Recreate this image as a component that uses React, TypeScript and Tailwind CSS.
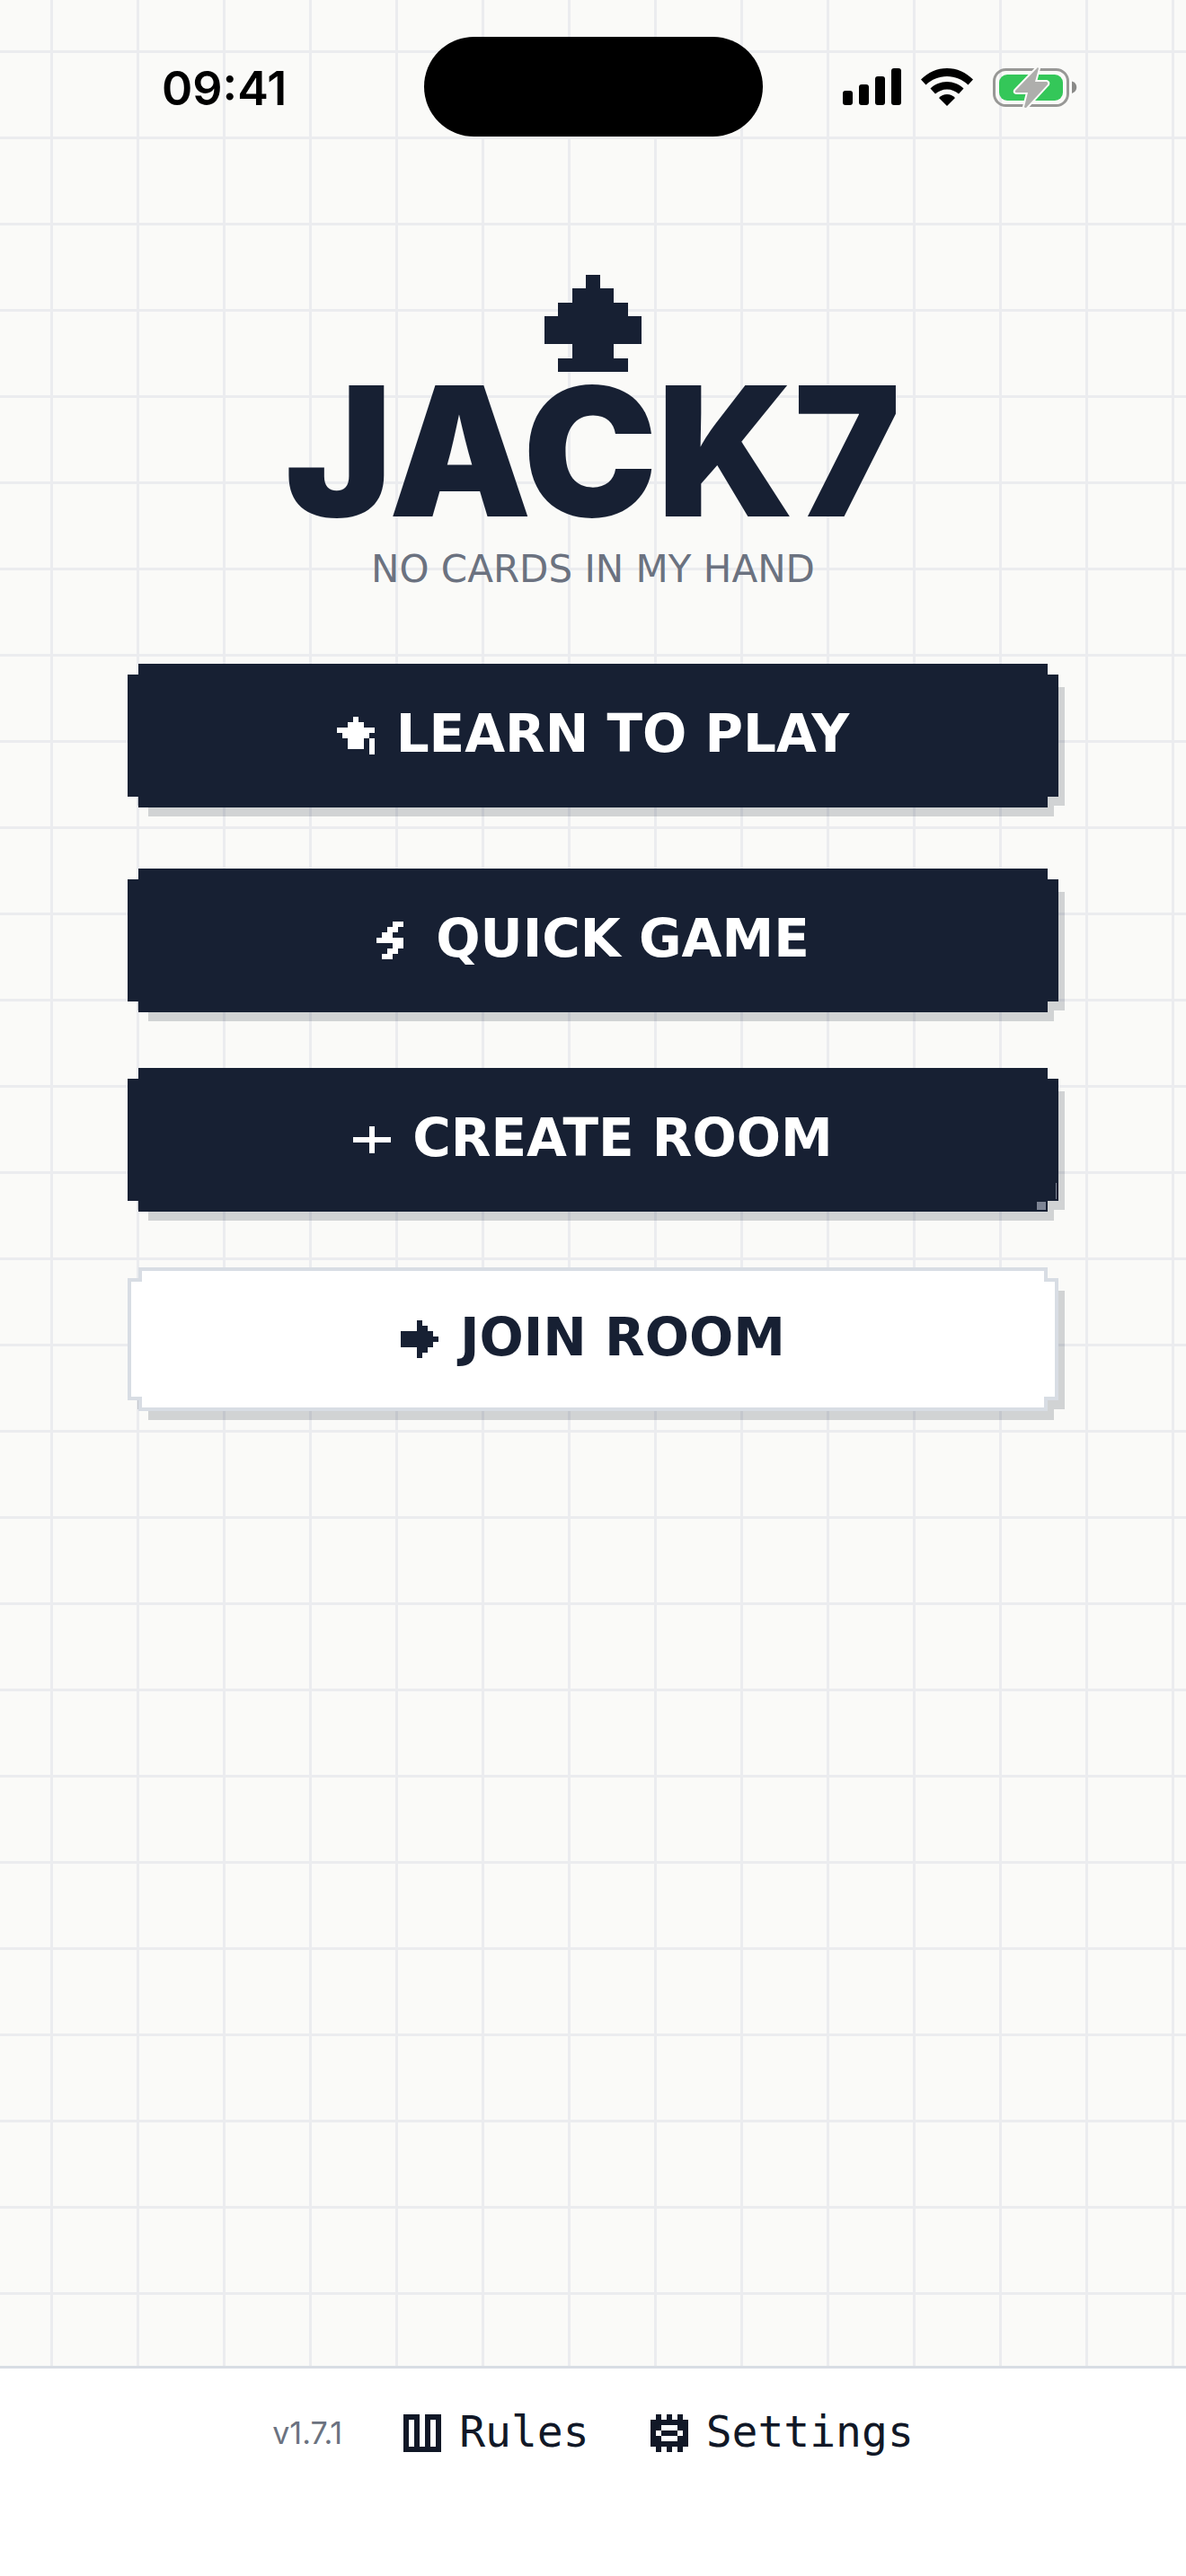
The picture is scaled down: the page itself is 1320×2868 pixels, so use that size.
interface PixelIconProps {
  rows: string[];
  className: string;
}

// Each "#" in a row is one filled cell
const PixelIcon = ({rows, className}: PixelIconProps) => {
  return (
    <svg
      viewBox={`0 0 ${rows[0].length} ${rows.length}`}
      className={className}
      fill="currentColor"
      shapeRendering="crispEdges"
      aria-hidden="true"
    >
      {rows.map((row, y) =>
        row.split("").map((cell, x) =>
          cell === "#" && <rect key={`${x}-${y}`} x={x} y={y} width="1" height="1"/>
        )
      )}
    </svg>
  );
};

const icons = {
  spade: ["...#...", "..###..", ".#####.", "#######", "#######", "..###..", ".#####."],
  learn: ["...#...", "..###..", "#######", ".#####.", "..###.#", "..###.#", "......#"],
  bolt: ["...##..", "..##...", ".##....", "#####..", "...##..", "..##...", ".##...."],
  plus: [".......", "...#...", "...#...", "#######", "...#...", "...#...", "......."],
  arrow: ["...#...", "...##..", "######.", "#######", "######.", "...##..", "...#..."],
  rules: ["###.###", "#.#.#.#", "#.#.#.#", "#.#.#.#", "#.#.#.#", "#.#.#.#", "#######"],
  settings: [".#.#.#.", "#######", "##...##", "#.###.#", "##...##", "#######", ".#.#.#."],
};

const notch = "[clip-path:polygon(12px_0,calc(100%-12px)_0,calc(100%-12px)_12px,100%_12px,100%_calc(100%-12px),calc(100%-12px)_calc(100%-12px),calc(100%-12px)_100%,12px_100%,12px_calc(100%-12px),0_calc(100%-12px),0_12px,12px_12px)]";

interface MenuButtonProps {
  label: string;
  icon: string[];
  light?: boolean;
  sparkle?: boolean;
  className?: string;
}

const MenuButton = ({label, icon, light, sparkle, className = ""}: MenuButtonProps) => {
  return (
    <div className={`relative ${className}`}>
      <span className={`absolute top-[14px] left-[11px] -right-[7px] -bottom-[10px] bg-[#172033]/18 ${notch}`}/>
      <button
        type="button"
        className={`relative block h-40 w-full cursor-pointer p-1 ${notch} ${light ? "bg-[#d8dde4] text-[#172033]" : "bg-[#172033] text-white"}`}
      >
        <span className={`flex h-full items-center justify-center gap-6 pb-1 ${light ? `bg-white ${notch}` : ""}`}>
          <PixelIcon rows={icon} className="mt-1 size-[42px]"/>
          <span className="text-[58px] leading-none font-bold whitespace-nowrap">{label}</span>
        </span>
        {sparkle && (
          <>
            <span className="absolute right-[14px] bottom-[2px] h-[9px] w-[10px] bg-[#7d8494]"/>
            <span className="absolute right-[2px] bottom-[14px] h-[18px] w-px bg-[#7d8494]"/>
          </>
        )}
      </button>
    </div>
  );
};

const StatusBar = () => {
  return (
    <div className="grid grid-cols-[1fr_377px_1fr] items-center pt-[41px] text-black">
      <time className="pt-1 pl-[180px] font-['Inter',sans-serif] text-[52px] leading-none font-semibold">09:41</time>
      <div className="h-[111px] rounded-full bg-black"/>
      <div className="flex items-center justify-end gap-[22px] pr-[121px]">
        <svg viewBox="0 0 65 42" className="h-[42px] w-[65px]" fill="currentColor" aria-label="Signal">
          <rect x="0" y="25" width="11" height="16" rx="3"/>
          <rect x="18" y="18" width="11" height="23" rx="3"/>
          <rect x="36" y="9" width="11" height="32" rx="3"/>
          <rect x="54" y="0" width="11" height="41" rx="3"/>
        </svg>
        <svg viewBox="0 0 58 42" className="h-[42px] w-[58px]" fill="currentColor" aria-label="Wi-Fi">
          <path d="M29 0C18 0 8 4.500 0 12.500L5.500 18.500C12 12.500 20 9 29 9S46 12.500 52.500 18.500L58 12.500C50 4.500 40 0 29 0Z"/>
          <path d="M29 15C22 15 15.500 17.800 10.500 22.500L16 28.500C19.500 25.500 24 23.500 29 23.500S38.500 25.500 42 28.500L47.500 22.500C42.500 17.800 36 15 29 15Z"/>
          <path d="M29 29C25.500 29 22.500 30.500 20 33L29 42L38 33C35.500 30.500 32.500 29 29 29Z"/>
        </svg>
        <svg viewBox="0 0 94 46" className="h-[46px] w-[94px]" aria-label="Battery charging">
          <rect x="1.500" y="3.500" width="82" height="40" rx="13" fill="none" stroke="#989896" strokeWidth="3"/>
          <rect x="7" y="9" width="71" height="29" rx="9" fill="#34c759"/>
          <path d="M88 16.500C95 18 95 28 88 30Z" fill="#8a8a88"/>
          <path
            d="M50 1L25 27Q24 29 27 29H39L35 45Q35 46 37 46L61 20Q62 18 60 17H47L51 2Z"
            fill="#aeaeac"
            stroke="#fafaf8"
            strokeWidth="4"
            strokeLinejoin="round"
            paintOrder="stroke"
          />
        </svg>
      </div>
    </div>
  );
};

const FooterLink = ({label, icon}: { label: string, icon: string[] }) => {
  return (
    <a href="#" className="flex items-center gap-5 text-[#111827]">
      <PixelIcon rows={icon} className="size-[42px]"/>
      <span className="pb-1 font-['DejaVu_Sans_Mono',monospace] text-[48px] leading-[44px]">{label}</span>
    </a>
  );
};

export default function App() {
  return (
    <div className="flex min-h-screen flex-col bg-[#fafaf8] bg-[linear-gradient(#ebecef_3px,transparent_3px),linear-gradient(90deg,#ebecef_3px,transparent_3px)] bg-size-[96px_96px] bg-position-[56px_56px] font-['DejaVu_Sans',sans-serif]">
      <StatusBar/>
      <header className="flex flex-col items-center pt-[154px] text-[#172033]">
        <PixelIcon rows={icons.spade} className="size-[108px]"/>
        <h1 className="font-['Inter',sans-serif] text-[200px] leading-[176px] font-black">JACK7</h1>
        <p className="pt-5 text-[42px] leading-[48px] text-[#6b7280]">NO CARDS IN MY HAND</p>
      </header>
      <main className="flex grow flex-col gap-[62px] px-[142px] pt-[81px]">
        <MenuButton label="LEARN TO PLAY" icon={icons.learn} className="mb-1.5"/>
        <MenuButton label="QUICK GAME" icon={icons.bolt}/>
        <MenuButton label="CREATE ROOM" icon={icons.plus} sparkle/>
        <MenuButton label="JOIN ROOM" icon={icons.arrow} light/>
      </main>
      <footer className="flex items-center justify-center gap-[68px] border-t-[3px] border-[#d8dde4] bg-white pt-12 pb-[135px]">
        <span className="font-['Inter',sans-serif] text-[34px] leading-none text-[#6b7280]">v1.7.1</span>
        <FooterLink label="Rules" icon={icons.rules}/>
        <FooterLink label="Settings" icon={icons.settings}/>
      </footer>
    </div>
  );
}
